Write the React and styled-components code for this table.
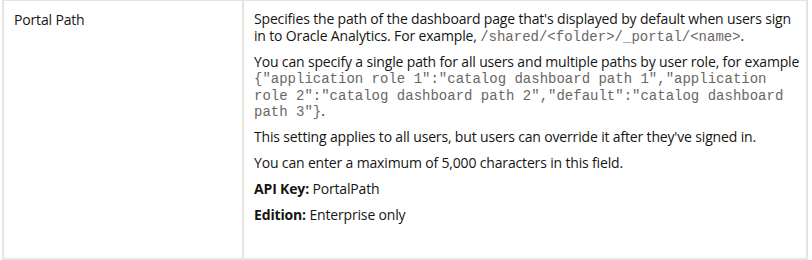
import React from 'react';
import styled, { createGlobalStyle } from 'styled-components';

const GlobalStyle = createGlobalStyle`
  body {
    margin: 0;
    background: #ffffff;
    font-family: "Open Sans", "Noto Sans", sans-serif;
    color: #161513;
  }
`;

const Table = styled.div`
  width: 804px;
  margin: -1px 0 0 2px;
  border-left: 2px solid #e5e4df;
  border-top: 2px solid #e5e4df;
`;

const Row = styled.div`
  display: grid;
  grid-template-columns: 240px 1fr;
`;

const Cell = styled.div`
  box-sizing: border-box;
  padding: ${({ wide }) => (wide ? '10px 2px 25px 10px' : '11px 10px')};
  border-right: 2px solid #e5e4df;
  border-bottom: 2px solid #e5e4df;
  font-size: 14px;
  line-height: 16.5px;
  letter-spacing: -0.16px;
`;

const Para = styled.p`
  margin: 0 0 9.5px 0;
`;

const Code = styled.code`
  font-family: "Liberation Mono", "Courier New", monospace;
  font-size: 14px;
  letter-spacing: 0;
  line-height: 12px;
  color: #6a6763;
`;

const Label = styled.b`
  font-weight: 700;
`;

const setting = {
  name: 'Portal Path',
  apiKey: 'PortalPath',
  edition: 'Enterprise only',
};

export default function App() {
  return (
    <>
      <GlobalStyle />
      <Table>
        <Row>
          <Cell>{setting.name}</Cell>
          <Cell wide>
            <Para>
              Specifies the path of the dashboard page that's displayed by default when users sign
              in to Oracle Analytics. For example, <Code>/shared/&lt;folder&gt;/_portal/&lt;name&gt;</Code>.
            </Para>
            <Para>
              You can specify a single path for all users and multiple paths by user role, for example{' '}
              <Code>
                {'{"application role 1":"catalog dashboard path 1","application role 2":"catalog dashboard path 2","default":"catalog dashboard path 3"}'}
              </Code>
              .
            </Para>
            <Para>This setting applies to all users, but users can override it after they've signed in.</Para>
            <Para>You can enter a maximum of 5,000 characters in this field.</Para>
            <Para>
              <Label>API Key:</Label> {setting.apiKey}
            </Para>
            <Para>
              <Label>Edition:</Label> {setting.edition}
            </Para>
          </Cell>
        </Row>
      </Table>
    </>
  );
}
